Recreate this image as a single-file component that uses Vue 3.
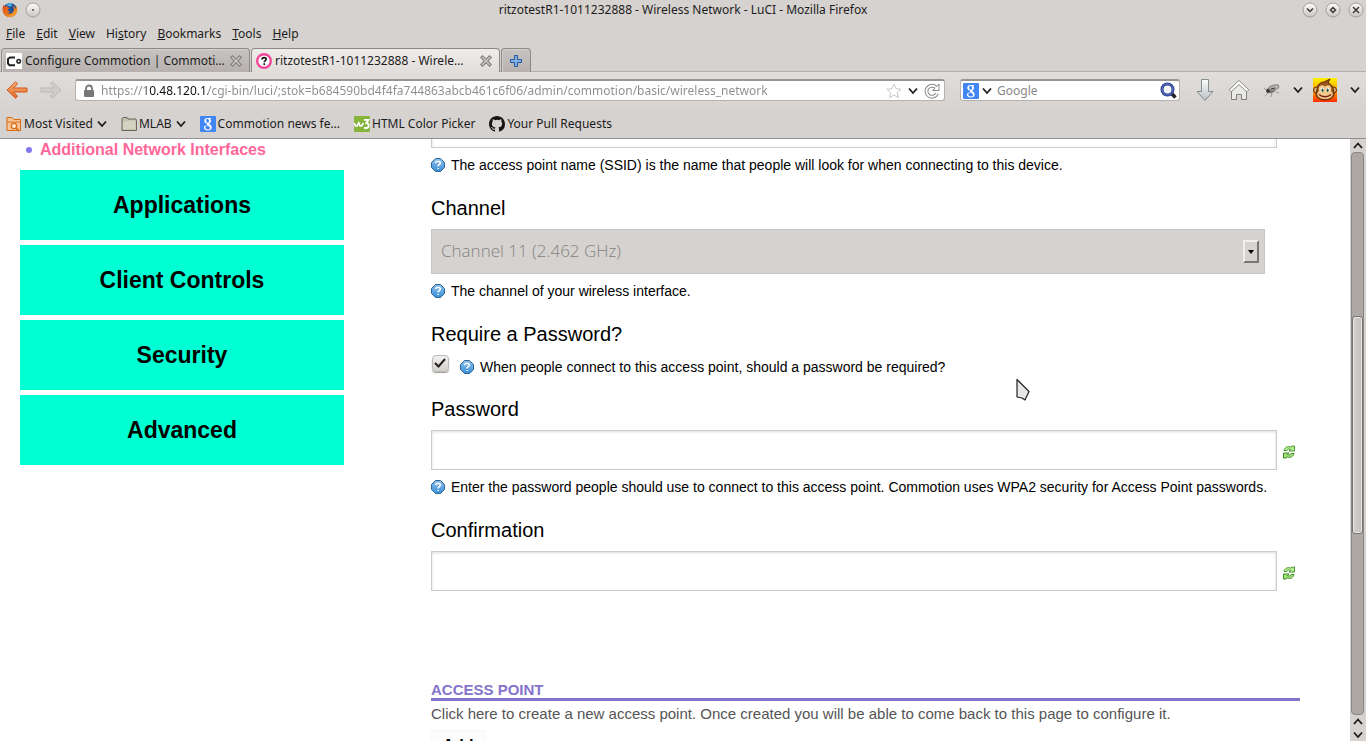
<script setup>
import { ref } from 'vue'

const menus = ['File', 'Edit', 'View', 'History', 'Bookmarks', 'Tools', 'Help']
const menuKeys = [0, 0, 0, 2, 0, 0, 0]
const sections = ['Applications', 'Client Controls', 'Security', 'Advanced']
const url = ref('https://10.48.120.1/cgi-bin/luci/;stok=b684590bd4f4fa744863abcb461c6f06/admin/commotion/basic/wireless_network')
const query = ref('')
const ssid = ref('')
const channel = ref('11')
const requirePassword = ref(true)
const password = ref('')
const confirmation = ref('')
</script>

<template>
  <div class="window">
    <svg class="defs" aria-hidden="true">
      <defs>
        <linearGradient id="ball" x1="0" y1="0" x2="0" y2="1"><stop offset="0" stop-color="#fdfdfc" /><stop offset="1" stop-color="#c9c5c2" /></linearGradient>
        <linearGradient id="steel" x1="0" y1="0" x2="0" y2="1"><stop offset="0" stop-color="#fbfbfa" /><stop offset="1" stop-color="#b9c2c6" /></linearGradient>
        <linearGradient id="blue" x1="0" y1="0" x2="0" y2="1"><stop offset="0" stop-color="#8cc0ec" /><stop offset="1" stop-color="#3c8fd8" /></linearGradient>
        <linearGradient id="orange" x1="0" y1="0" x2="0" y2="1"><stop offset="0" stop-color="#f9b27c" /><stop offset="1" stop-color="#e06a22" /></linearGradient>
        <linearGradient id="flame" x1="0" y1="0" x2="1" y2="1"><stop offset="0" stop-color="#e0471a" /><stop offset=".6" stop-color="#ef7d1c" /><stop offset="1" stop-color="#fbc63a" /></linearGradient>
        <linearGradient id="sunset" x1="0" y1="0" x2="0" y2="1"><stop offset="0" stop-color="#fff200" /><stop offset=".5" stop-color="#ffa800" /><stop offset="1" stop-color="#ff2a00" /></linearGradient>
        <symbol id="help" viewBox="0 0 14 14">
          <path d="M4.500.5h5l4 4v5l-4 4h-5l-4-4v-5z" fill="url(#blue)" stroke="#2e6699" />
          <path d="M4.800 5.200V4.500L5.700 3.500h2.600l.9.9v1.200L7.200 7.600v1M7.200 9.900v1.200" fill="none" stroke="#fff" stroke-width="1.500" />
        </symbol>
        <symbol id="chev" viewBox="0 0 10 8"><path d="M1 1.500l4 4.500 4-4.500" fill="none" stroke="#1c1c1c" stroke-width="1.800" /></symbol>
        <symbol id="refresh" viewBox="0 0 12 14">
          <path d="M1 5.500C1.500 2.500 5 .5 7.800 2.200L9 1h2.500v5H6l1.600-1.600C5.800 3.600 4.300 4.300 3.800 5.500z" fill="#b5ea8e" stroke="#4a9630" />
          <path d="M11 8.500c-.5 3-4 5-6.800 3.300L3 13H.5V8H6L4.400 9.600c1.800.8 3.300.1 3.800-1.100z" fill="#a0e274" stroke="#3f8a28" />
        </symbol>
        <symbol id="google" viewBox="0 0 16 16">
          <rect width="16" height="16" rx="1" fill="#4285f4" />
          <path d="M10.800 2H7.500C5.300 2 4.300 3.300 4.300 4.900c0 1.500 1.100 2.600 2.900 2.600-.4.700-.2 1.200.3 1.700C5.100 9.300 3.900 10.300 3.900 11.800c0 1.500 1.300 2.600 3.800 2.600 2.600 0 4-1.300 4-3 0-1.200-.6-1.900-1.500-2.600-1-.8-1.100-1.200-.3-1.900.8-.6 1.100-1.300 1.100-2.100 0-.8-.3-1.400-.9-1.900h.9zM7.400 2.800c1.800 0 2.500 4 .4 4-1.800 0-2.400-4-.4-4zm.5 7c1.300.8 2 1.200 2 2.100 0 .9-.7 1.600-2 1.600-1.700 0-2.600-.8-2.600-1.900 0-1.200 1-1.800 2.600-1.800z" fill="#fff" />
        </symbol>
        <symbol id="close" viewBox="0 0 12 12"><path d="M2.500 2.500l7 7m0-7l-7 7" stroke="#7f7d7a" stroke-width="3.600" stroke-linecap="square" /><path d="M2.500 2.500l7 7m0-7l-7 7" stroke="#cfccc8" stroke-width="1.400" stroke-linecap="square" /></symbol>
      </defs>
    </svg>

    <header class="titlebar">
      <div class="title-left">
        <svg width="16" height="16" viewBox="0 0 16 16">
          <circle cx="8" cy="8" r="7" fill="#234f94" />
          <path d="M4 3c2-2 5-2.500 7-1.500C9 3 10 4 8.500 5z" fill="#4fa8de" />
          <path d="M2 2.500C-.5 6 .2 11 3.500 13.800 8 17 14.500 14.500 15.300 9c.3-2.500-.3-4.500-1.800-6 .6 2 .5 3 .2 4-.8-2-1.700-3-3-3.500C12.500 6 12.200 9.500 10 11c-2 1.200-4 .6-5-.5 1.700.4 2.700 0 3.500-1-2 0-2.600-1-3-2 .7-.5 1.500-.5 2-1.500C6 5.800 5.400 5.500 5.500 4 4.500 3.800 4 4 3.300 4.800 2.600 4.300 2 3.700 2 2.500z" fill="url(#flame)" />
        </svg>
        <button class="round" aria-label="Window menu"><svg width="16" height="16" viewBox="0 0 16 16"><circle cx="8" cy="8" r="7" fill="url(#ball)" stroke="#a19e9b" /><circle cx="8" cy="8" r="1" fill="#555" /></svg></button>
      </div>
      <h1 class="window-title">ritzotestR1-1011232888 - Wireless Network - LuCI - Mozilla Firefox</h1>
      <div class="title-right">
        <button class="round" aria-label="Minimize"><svg width="16" height="16" viewBox="0 0 16 16"><circle cx="8" cy="8" r="7" fill="url(#ball)" stroke="#a19e9b" /><path d="M5 6.500l3 3 3-3" fill="none" stroke="#3a3a3a" stroke-width="1.500" /></svg></button>
        <button class="round" aria-label="Maximize"><svg width="16" height="16" viewBox="0 0 16 16"><circle cx="8" cy="8" r="7" fill="url(#ball)" stroke="#a19e9b" /><path d="M8 5.500L10.500 8 8 10.500 5.500 8z" fill="none" stroke="#3a3a3a" stroke-width="1.500" /></svg></button>
        <button class="round" aria-label="Close window"><svg width="16" height="16" viewBox="0 0 16 16"><circle cx="8" cy="8" r="7" fill="url(#ball)" stroke="#a19e9b" /><path d="M5 5l6 6m0-6l-6 6" stroke="#3a3a3a" stroke-width="1.500" /></svg></button>
      </div>
    </header>

    <nav class="menubar">
      <button v-for="(m, i) in menus" :key="m">{{ m.slice(0, menuKeys[i]) }}<u>{{ m[menuKeys[i]] }}</u>{{ m.slice(menuKeys[i] + 1) }}</button>
    </nav>

    <div class="tabs">
      <div class="tab">
        <svg width="16" height="16" viewBox="0 0 16 16"><rect width="16" height="16" fill="#fff" /><path d="M9 4.500H4L2 6v4.500l1.500 1.700H9" fill="none" stroke="#222" stroke-width="2" /><circle cx="12.700" cy="8.300" r="1.800" fill="none" stroke="#222" stroke-width="1.500" /></svg>
        <button class="tab-name">Configure Commotion | Commoti…</button>
        <button class="tab-close" aria-label="Close tab"><svg width="12" height="12"><use href="#close" /></svg></button>
      </div>
      <div class="tab active">
        <svg width="16" height="16" viewBox="0 0 16 16"><circle cx="8" cy="8" r="6.800" fill="#fff" stroke="#f0489a" stroke-width="2.400" /><path d="M6 6.500C6 4 10.200 4 10.200 6.300c0 1.200-2 1.400-2 3M8.200 10.300v1.700" fill="none" stroke="#111" stroke-width="1.600" /></svg>
        <button class="tab-name">ritzotestR1-1011232888 - Wirele…</button>
        <button class="tab-close" aria-label="Close tab"><svg width="12" height="12"><use href="#close" /></svg></button>
      </div>
      <button class="new-tab" aria-label="New tab"><svg width="14" height="14" viewBox="0 0 14 14"><path d="M5.500 1.500h3v4h4v3h-4v4h-3v-4h-4v-3h4z" fill="#7fb0e6" stroke="#24569f" stroke-linejoin="round" /></svg></button>
    </div>

    <div class="toolbar">
      <button class="back" aria-label="Back"><svg width="24" height="20" viewBox="0 0 24 20"><path d="M10.500 1.800L2 10l8.500 8.200 2-1.900L8.600 12H22V8H8.600l3.900-4.300z" fill="url(#orange)" stroke="#d0561a" stroke-linejoin="round" /></svg></button>
      <button class="forward" aria-label="Forward"><svg width="24" height="20" viewBox="0 0 24 20"><path d="M13.500 1.800L22 10l-8.500 8.200-2-1.900L15.400 12H2V8h13.400l-3.900-4.300z" fill="#d0cdca" stroke="#bab7b4" stroke-linejoin="round" /></svg></button>
      <div class="field url">
        <svg width="12" height="14" viewBox="0 0 12 14"><path d="M3 6.500V4.500a3 3 0 0 1 6 0v2" fill="none" stroke="#777" stroke-width="1.800" /><rect x="1" y="6" width="10" height="7" rx="1" fill="#777" /></svg>
        <input v-model="url" type="text" aria-label="Address" class="address" />
        <button aria-label="Bookmark page"><svg width="16" height="16" viewBox="0 0 16 16"><path d="M8 1l2.100 4.700 5 .5-3.800 3.400 1.100 5L8 12l-4.400 2.600 1.100-5L.9 6.200l5-.5z" fill="#fff" stroke="#c8c8c8" /></svg></button>
        <button aria-label="History list"><svg width="10" height="8"><use href="#chev" /></svg></button>
        <button aria-label="Reload"><svg width="16" height="16" viewBox="0 0 16 16"><path d="M13 10.500a5.500 5.500 0 1 1-1-6" fill="none" stroke="#888" stroke-width="3.800" /><path d="M15 1v6.500H8.500z" fill="#fff" stroke="#888" /><path d="M13 10.500a5.500 5.500 0 1 1-1-6" fill="none" stroke="#fff" stroke-width="1.800" /></svg></button>
      </div>
      <div class="field search">
        <svg width="16" height="16"><use href="#google" /></svg>
        <button aria-label="Search engine"><svg width="10" height="8"><use href="#chev" /></svg></button>
        <input v-model="query" type="text" placeholder="Google" aria-label="Search" />
        <button aria-label="Search"><svg width="17" height="17" viewBox="0 0 17 17"><path d="M11.500 11.500l4 4" stroke="#222" stroke-width="3.600" /><circle cx="7.500" cy="7.500" r="5.500" fill="#f3f7fd" stroke="#25388a" stroke-width="3" /><circle cx="7.500" cy="7.500" r="5.500" fill="none" stroke="#6e86d0" /></svg></button>
      </div>
      <div class="tools">
        <button aria-label="Downloads"><svg width="20" height="24" viewBox="0 0 20 24"><path d="M6.500 1.500h7v12h4.500L10 22.500 2 13.500h4.500z" fill="url(#steel)" stroke="#838b8d" stroke-linejoin="round" /></svg></button>
        <button class="home" aria-label="Home"><svg width="22" height="22" viewBox="0 0 22 22"><path d="M3.500 11.500v9h5v-5h5v5h5v-9L11 5z" fill="#e9e9e7" stroke="#7f7f7c" /><path d="M11 1.500L1.200 10.800l2 2L11 5.600l7.800 7.200 2-2z" fill="#fff" stroke="#8a8a87" stroke-linejoin="round" /></svg></button>
        <button class="fly" aria-label="Firebug"><svg width="18" height="16" viewBox="0 0 18 16"><path d="M3 8L1 6m4 5l-3 3m7-3l-1 4m5-5l3 1M13 5l2-3" stroke="#999" /><ellipse cx="8" cy="8" rx="5" ry="3" fill="#777" transform="rotate(-15 8 8)" /><ellipse cx="11" cy="5.500" rx="5" ry="2.400" fill="#b2b2b0" stroke="#888" transform="rotate(-15 11 5.500)" /><circle cx="5" cy="9" r="1.800" fill="#333" /><path d="M8 7l4-1" stroke="#333" /></svg></button>
        <button aria-label="Firebug menu"><svg width="10" height="8"><use href="#chev" /></svg></button>
        <button class="monkey" aria-label="Greasemonkey"><svg width="24" height="24" viewBox="0 0 24 24"><rect width="24" height="24" fill="url(#sunset)" /><circle cx="3.500" cy="12" r="3" fill="#e6ae6d" stroke="#572c0c" /><circle cx="20.500" cy="12" r="3" fill="#e6ae6d" stroke="#572c0c" /><path d="M4 12C4 6 8 4 11 4l6-3-2 4c4 1 5.500 5 5.500 8 2 4-1 9-8.500 9S1.500 18 4 12z" fill="#9a5218" stroke="#572c0c" /><path d="M12 8.500C8 5.500 4.500 9 6 13c-4 3-1 8 6 8s10-5 6-8c1.500-4-2-7.500-6-4.500z" fill="#f2c98d" /><ellipse cx="9.200" cy="11.800" rx="1.600" ry="2.300" fill="#fff" /><ellipse cx="15" cy="11.800" rx="1.600" ry="2.300" fill="#fff" /><ellipse cx="9.500" cy="12.300" rx="1" ry="1.700" fill="#174c3e" /><ellipse cx="14.700" cy="12.300" rx="1" ry="1.700" fill="#174c3e" /><path d="M6 16.500c3 3 9 3 12 0" fill="none" stroke="#7a1d10" stroke-width="1.300" /></svg></button>
        <button aria-label="Greasemonkey menu"><svg width="10" height="8"><use href="#chev" /></svg></button>
      </div>
    </div>

    <nav class="bookmarks">
      <button><svg width="16" height="16" viewBox="0 0 16 16"><path d="M1 14.500v-13h5l2 2h6.500v11z" fill="#f7c595" stroke="#d86b12" /><path d="M1 6h14" stroke="#d86b12" /><circle cx="8" cy="10" r="2.600" fill="#fff0df" stroke="#d86b12" stroke-width="1.300" /><path d="M10 12l3 3" stroke="#d86b12" stroke-width="1.600" /></svg>Most Visited<svg class="more" width="10" height="8"><use href="#chev" /></svg></button>
      <button><svg width="16" height="16" viewBox="0 0 16 16"><path d="M1 14.500V2.500L2 1.500h4l1 1.500h8v1.500h.5v10z" fill="#bfc0ab" stroke="#66675a" /><path d="M2 13.500v-8h4l1-1h7.500v9z" fill="#d2d3c1" /></svg>MLAB<svg class="more" width="10" height="8"><use href="#chev" /></svg></button>
      <a href="#news"><svg width="16" height="16"><use href="#google" /></svg>Commotion news fe…</a>
      <a href="#picker"><svg width="16" height="16" viewBox="0 0 16 16"><rect width="16" height="16" rx="1" fill="#86b53c" /><path d="M0 7l1.500 3h1.700l1.500-3 1.500 3h1.500L9.300 7" fill="none" stroke="#fff" stroke-width="1.700" /><path d="M10 3.800h4.500L12.300 7c3.500.3 3 5 0 5H10" fill="none" stroke="#fff" stroke-width="1.800" /></svg>HTML Color Picker</a>
      <a href="#pulls"><svg width="16" height="16" viewBox="0 0 16 16"><path fill="#151515" d="M8 0C3.580 0 0 3.580 0 8c0 3.540 2.290 6.530 5.470 7.590.4.070.55-.17.55-.38 0-.19-.01-.82-.01-1.490-2.010.37-2.530-.49-2.690-.94-.09-.23-.48-.94-.82-1.130-.28-.15-.68-.52-.01-.53.63-.01 1.080.58 1.230.82.72 1.210 1.870.87 2.330.66.070-.52.280-.87.510-1.070-1.780-.2-3.640-.89-3.640-3.950 0-.87.310-1.590.82-2.150-.08-.2-.36-1.020.08-2.120 0 0 .67-.21 2.200.82a7.600 7.600 0 0 1 4 0c1.530-1.040 2.200-.82 2.200-.82.44 1.100.16 1.920.08 2.120.51.560.82 1.270.82 2.150 0 3.070-1.870 3.750-3.650 3.950.29.250.54.730.54 1.480 0 1.070-.01 1.930-.01 2.200 0 .21.150.46.550.38A8 8 0 0 0 16 8c0-4.420-3.580-8-8-8z" /></svg>Your Pull Requests</a>
    </nav>

    <div class="viewport">
      <div class="page">
        <aside>
          <ul><li><a href="#interfaces">Additional Network Interfaces</a></li></ul>
          <a v-for="s in sections" :key="s" class="section" href="#section">{{ s }}</a>
        </aside>

        <main>
          <form @submit.prevent>
            <div class="row first">
              <input id="ssid" v-model="ssid" type="text" class="text" aria-label="Access point name" aria-describedby="ssid-help" />
            </div>
            <p id="ssid-help" class="help"><svg width="14" height="14"><use href="#help" /></svg>The access point name (SSID) is the name that people will look for when connecting to this device.</p>

            <label class="name" for="channel">Channel</label>
            <div class="select">
              <select id="channel" v-model="channel" disabled><option value="11">Channel 11 (2.462 GHz)</option></select>
              <span class="drop"><svg width="6" height="4" viewBox="0 0 6 4"><path d="M0 0h6L3 4z" /></svg></span>
            </div>
            <p class="help"><svg width="14" height="14"><use href="#help" /></svg>The channel of your wireless interface.</p>

            <label class="name" for="require">Require a Password?</label>
            <div class="check">
              <input id="require" v-model="requirePassword" type="checkbox" />
              <svg class="tick" v-show="requirePassword" width="12" height="10" viewBox="0 0 12 10"><path d="M1 5l3.500 3.500L11 1" fill="none" stroke="#222" stroke-width="2" /></svg>
              <p class="help"><svg width="14" height="14"><use href="#help" /></svg>When people connect to this access point, should a password be required?</p>
            </div>

            <label class="name" for="password">Password</label>
            <div class="row">
              <input id="password" v-model="password" type="password" class="text" />
              <button type="button" class="reveal" aria-label="Reveal password"><svg width="12" height="14"><use href="#refresh" /></svg></button>
            </div>
            <p class="help"><svg width="14" height="14"><use href="#help" /></svg>Enter the password people should use to connect to this access point. Commotion uses WPA2 security for Access Point passwords.</p>

            <label class="name" for="confirmation">Confirmation</label>
            <div class="row">
              <input id="confirmation" v-model="confirmation" type="password" class="text" />
              <button type="button" class="reveal" aria-label="Reveal confirmation"><svg width="12" height="14"><use href="#refresh" /></svg></button>
            </div>

            <h2>ACCESS POINT</h2>
            <p class="note">Click here to create a new access point. Once created you will be able to come back to this page to configure it.</p>
            <button type="button" class="add">Add</button>
          </form>
        </main>
      </div>

      <div class="scrollbar" aria-hidden="true">
        <span class="arrow"><svg width="10" height="8" viewBox="0 0 10 8"><path d="M1 6l4-4.500L9 6" fill="none" stroke="#1c1c1c" stroke-width="1.800" /></svg></span>
        <div class="track"><div class="thumb"></div></div>
        <span class="arrow"><svg width="10" height="8" viewBox="0 0 10 8"><path d="M1 6l4-4.500L9 6" fill="none" stroke="#1c1c1c" stroke-width="1.800" /></svg></span>
        <span class="arrow"><svg width="10" height="8"><use href="#chev" /></svg></span>
      </div>
    </div>

    <svg class="pointer" width="14" height="24" viewBox="0 0 14 24" aria-hidden="true"><path d="M1 1.500V19l5 1 3 2 4-8.500z" fill="#e6e6e6" stroke="#222" stroke-width="1.200" stroke-linejoin="round" /></svg>
  </div>
</template>

<style>
body { margin: 0; overflow: hidden; }
</style>

<style scoped>
* { box-sizing: border-box; }
.window { position: relative; display: flex; flex-direction: column; height: 100vh; background: #d6d2cf; color: #1c1c1c; font: 12px/16px "Noto Sans", sans-serif; }
.defs { position: absolute; width: 0; height: 0; }
svg { display: block; flex: none; }
button { margin: 0; padding: 0; border: 0; background: none; font: inherit; color: inherit; white-space: nowrap; }
a { color: inherit; text-decoration: none; }
input { min-width: 0; margin: 0; padding: 0; border: 0; outline: 0; font: inherit; }

.titlebar { display: grid; grid-template-columns: 1fr auto 1fr; align-items: center; height: 20px; padding: 0 2px; }
.title-left, .title-right { display: flex; align-items: center; gap: 7px; }
.title-right { justify-content: flex-end; }
.window-title { margin: 0; font-size: 12px; font-weight: 400; line-height: 20px; }
.menubar { display: flex; align-items: center; gap: 11px; height: 28px; padding: 0 6px; }

.tabs { display: flex; height: 24px; padding: 0 1px; gap: 1px; border-bottom: 1px solid #b4b0ad; }
.tab, .new-tab { height: 24px; border: 1px solid #8d8987; border-bottom: 0; border-radius: 4px 4px 0 0; background: linear-gradient(#c8c4c2, #b6b1af); box-shadow: inset 1px 1px #d4d0ce; }
.tab { display: flex; align-items: center; gap: 3px; flex: 0 1 249px; padding: 0 7px 0 4px; }
.tab.active { background: linear-gradient(#efedeb, #e1dddb); box-shadow: none; }
.tab-name { flex: 1; text-align: left; overflow: hidden; }
.new-tab { display: grid; place-items: center; width: 30px; }

.toolbar { display: flex; align-items: center; height: 36px; padding: 0 6px 0 5px; background: linear-gradient(#e1dddb, #d7d3d0); }
.forward { margin: 0 12px 0 10px; }
.field { display: flex; align-items: center; height: 22px; border: 1px solid #b5b1ae; border-top: 2px solid #989492; border-radius: 3px; background: #fff; }
.url { flex: 1; gap: 6px; padding: 0 4px 0 7px; }
.address { flex: 1; -webkit-text-fill-color: transparent; background: linear-gradient(90deg, #8c8c8c 45px, #111 45px, #111 107px, #8c8c8c 107px); background-clip: text; }
.search { width: 220px; gap: 3px; margin: 0 15px; padding: 0 2px; }
.search input { flex: 1; margin-left: 2px; }
.search input::placeholder { color: #888; opacity: 1; }
.tools { display: flex; align-items: center; }
.home { margin: 0 13px; }
.fly { margin-right: 12px; }
.monkey { margin: 0 13px 0 10px; }

.bookmarks { display: flex; align-items: center; height: 31px; padding: 2px 6px 0; gap: 14px; border-bottom: 1px solid #929090; }
.bookmarks button, .bookmarks a { display: flex; align-items: center; gap: 2px; white-space: nowrap; }
.more { margin-left: 2px; }

.viewport { display: flex; flex: 1; min-height: 0; background: #fff; color: #000; font-family: "Liberation Sans", Arial, sans-serif; }
.page { display: grid; grid-template-columns: 324fr 869fr; gap: 87px; flex: 1; min-width: 0; padding: 0 50px 0 20px; overflow: hidden; }
ul { margin: 0 0 10px; padding: 0 0 0 6px; list-style: none; }
li { display: flex; align-items: center; gap: 8px; color: #f69; font-size: 16px; font-weight: 700; line-height: 21px; }
li::before { content: ""; width: 6px; height: 6px; border-radius: 50%; background: #8478ee; }
.section { display: grid; place-items: center; height: 70px; margin-bottom: 5px; background: #00ffd2; font-size: 23px; font-weight: 700; line-height: 28px; }

.row { display: flex; align-items: center; gap: 6px; padding-right: 5px; }
.row.first { margin-top: -31px; padding-right: 23px; }
.text { flex: 1; height: 40px; padding: 0 10px; border: 1px solid #ccc; box-shadow: inset 0 1px 3px rgba(0, 0, 0, .15); font-size: 18px; }
.reveal { padding-top: 3px; }
.help { display: flex; align-items: center; gap: 6px; margin: 0 0 14px; font-size: 14px; line-height: 34px; white-space: nowrap; }
.name { display: block; margin-bottom: 9px; font-size: 20px; line-height: 24px; }
.select { position: relative; width: 96%; }
select { display: block; width: 100%; height: 45px; padding: 0 9px 2px; appearance: none; border: 1px solid #c6c4c2; border-radius: 0; background: #d6d2cf; color: #858381; opacity: 1; font: 300 17px/24px "Open Sans", "Noto Sans", sans-serif; }
.drop { position: absolute; top: 11px; right: 6px; display: grid; place-items: center; width: 16px; height: 23px; border: 2px solid; border-color: #f2f0ee #777 #777 #f2f0ee; }
.check { position: relative; display: flex; align-items: flex-start; gap: 11px; height: 42px; padding-left: 1px; }
.check .help { line-height: 24px; }
.check input { width: 17px; height: 17px; appearance: none; border: 1px solid #bbb8b5; border-radius: 4px; background: linear-gradient(#f3f2f1, #d3d0cd); box-shadow: 0 1px 1px #999; }
.tick { position: absolute; top: 3px; left: 3px; pointer-events: none; }
h2 { margin: 91px 0 0; border-bottom: 3px solid #8574cc; color: #8574cc; font-size: 15px; line-height: 16px; }
.note { margin: 0 0 4px; color: #555; font-size: 15px; line-height: 26px; }
.add { width: 54px; height: 30px; background: #fcfcfc; box-shadow: 0 0 1px #ccc; font-size: 16px; font-weight: 700; line-height: 22px; }

.scrollbar { display: flex; flex-direction: column; width: 16px; background: #d6d2cf; }
.arrow { display: grid; place-items: center; height: 13px; }
.track { display: grid; grid-template-rows: 164fr 219fr 181fr; flex: 1; margin: 0 2px 0 1px; border: 1px solid #8c8785; border-radius: 4px; background: #aea8a5; }
.thumb { grid-row: 2; border: 1px solid #777371; border-radius: 3px; background: linear-gradient(90deg, #d4d0cd, #c3bfbc); box-shadow: inset 0 0 0 1px #e8e6e4; }
.pointer { position: absolute; top: 378px; left: 1016px; }
</style>
